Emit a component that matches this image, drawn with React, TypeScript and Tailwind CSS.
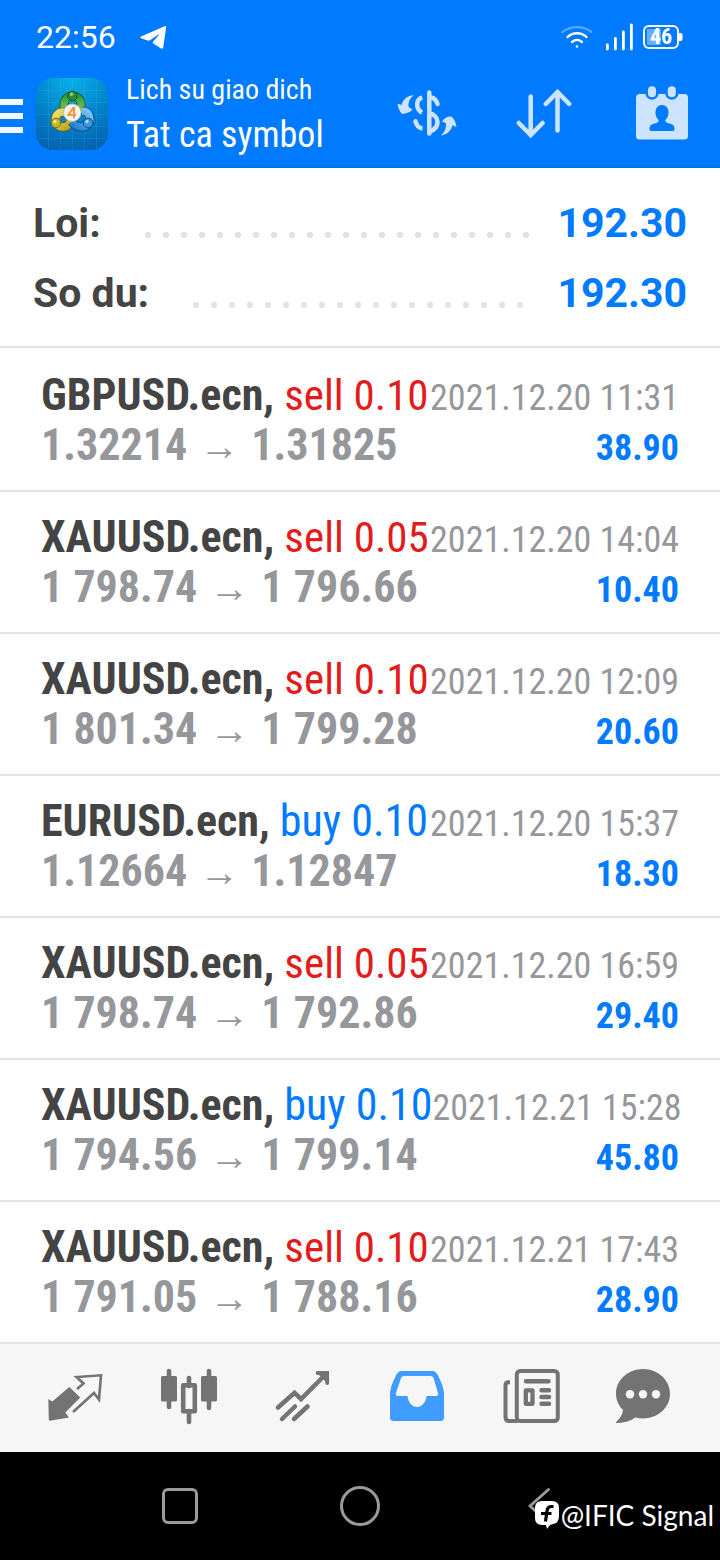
import type { ReactNode } from "react";

type Deal = {
  symbol: string;
  side: "buy" | "sell";
  volume: string;
  open: string;
  close: string;
  time: string;
  profit: string;
};

const deals: Deal[] = [
  { symbol: "GBPUSD.ecn", side: "sell", volume: "0.10", open: "1.32214", close: "1.31825", time: "2021.12.20 11:31", profit: "38.90" },
  { symbol: "XAUUSD.ecn", side: "sell", volume: "0.05", open: "1 798.74", close: "1 796.66", time: "2021.12.20 14:04", profit: "10.40" },
  { symbol: "XAUUSD.ecn", side: "sell", volume: "0.10", open: "1 801.34", close: "1 799.28", time: "2021.12.20 12:09", profit: "20.60" },
  { symbol: "EURUSD.ecn", side: "buy", volume: "0.10", open: "1.12664", close: "1.12847", time: "2021.12.20 15:37", profit: "18.30" },
  { symbol: "XAUUSD.ecn", side: "sell", volume: "0.05", open: "1 798.74", close: "1 792.86", time: "2021.12.20 16:59", profit: "29.40" },
  { symbol: "XAUUSD.ecn", side: "buy", volume: "0.10", open: "1 794.56", close: "1 799.14", time: "2021.12.21 15:28", profit: "45.80" },
  { symbol: "XAUUSD.ecn", side: "sell", volume: "0.10", open: "1 791.05", close: "1 788.16", time: "2021.12.21 17:43", profit: "28.90" },
];

function StatusBar() {
  return (
    <div className="flex h-[72px] items-center justify-between pt-[2px] pl-9 pr-[37px]">
      <div className="flex items-center gap-6">
        <span className="text-[32px] leading-10">22:56</span>
        <svg className="h-6 w-7" viewBox="139 25 28 24" fill="currentColor">
          <path d="M163.500 26.200 140 36.600c-.9.400-.9 1.200 0 1.600l6.500 2.300c.9.300 1.700.2 2.400-.3l8.600-5.700c.8-.4 1 .1.5.6l-5.900 6.300c-.6.700-.5 1.500.3 2l7.700 5c1 .6 1.900.4 2.100-.8l2.900-19.900c.2-1.200-.5-2-1.600-1.500z" />
        </svg>
      </div>
      <div className="flex items-center gap-3">
        <svg className="h-7 w-8" viewBox="561 22 32 28" fill="none" stroke="currentColor" strokeWidth="2.300" strokeLinecap="round">
          <path d="M562.500 31c8-6.500 21-6.500 29 0" opacity=".35" />
          <path d="M567.500 36c5.500-5 13.500-5 19 0" />
          <path d="M572 41c3-2.500 7-2.500 10 0" />
          <circle cx="577" cy="45.500" r="1.200" fill="currentColor" stroke="none" />
        </svg>
        <div className="flex items-center gap-[10px]">
          <svg className="h-7 w-7" viewBox="605 22 28 28" fill="none" stroke="currentColor" strokeWidth="2.800" strokeLinecap="round">
            <path d="M607.400 48v-4M615.400 48V37.500M623.400 48V31M631.400 48V24" />
          </svg>
          <span className="relative flex h-6 w-10 items-center">
            <svg className="absolute inset-0 h-6 w-10" viewBox="643 23 40 24">
              <rect x="644" y="24" width="34" height="22" rx="5" fill="none" stroke="currentColor" strokeWidth="2" />
              <path d="M647 27h14v16h-14z" fill="currentColor" opacity=".4" />
              <path d="M679 31h1.500q2 0 2 2v4q0 2-2 2H679z" fill="currentColor" />
            </svg>
            <span className="relative w-9 text-center font-['Roboto_Condensed',Roboto,sans-serif] text-[22px] leading-6 font-bold">46</span>
          </span>
        </div>
      </div>
    </div>
  );
}

function AppLogo() {
  return (
    <svg className="h-[72px] w-[72px] shrink-0" viewBox="0 0 72 72">
      <defs>
        <radialGradient id="tile" cx=".5" cy="0" r="1">
          <stop offset="0" stopColor="#08b2ea" />
          <stop offset=".55" stopColor="#0284ca" />
          <stop offset="1" stopColor="#0464b2" />
        </radialGradient>
        <linearGradient id="green" x1="0" y1="0" x2="0" y2="1">
          <stop offset="0" stopColor="#2f9a3c" />
          <stop offset="1" stopColor="#8fce62" />
        </linearGradient>
        <linearGradient id="yellow" x1="0" y1="0" x2="1" y2="1">
          <stop offset="0" stopColor="#efe26a" />
          <stop offset="1" stopColor="#b9a51c" />
        </linearGradient>
        <linearGradient id="blue" x1="1" y1="0" x2="0" y2="1">
          <stop offset="0" stopColor="#7cc6f2" />
          <stop offset="1" stopColor="#1c7fd0" />
        </linearGradient>
      </defs>
      <rect width="72" height="72" rx="17" fill="url(#tile)" />
      <path d="M12.500 2v68M24.500 0v72M36.500 0v72M48.500 0v72M60.500 2v68M2 12.500h68M0 24.500h72M0 36.500h72M0 48.500h72M2 60.500h68" stroke="#5fd0f5" strokeWidth=".7" opacity=".2" />
      <g fill="none">
        <circle cx="36.500" cy="26.500" r="8.500" stroke="#14531f" strokeWidth="9" />
        <circle cx="36.500" cy="26.500" r="8.500" stroke="url(#green)" strokeWidth="7.400" />
        <circle cx="27" cy="41.500" r="7.500" stroke="#6f6410" strokeWidth="9" />
        <circle cx="27" cy="41.500" r="7.500" stroke="url(#yellow)" strokeWidth="7.400" />
        <path d="M46 33c6 0 8 4.500 8 8.500s-4 7.500-8 7.500-8-2-10-5" stroke="#0a4680" strokeWidth="9" />
        <path d="M46 33c6 0 8 4.500 8 8.500s-4 7.500-8 7.500-8-2-10-5" stroke="url(#blue)" strokeWidth="7.400" />
      </g>
      <circle cx="36.500" cy="18" r="4.800" fill="#2a8a36" stroke="#14531f" strokeWidth=".9" />
      <circle cx="35.500" cy="16.300" r="1.700" fill="#8ad08c" />
      <circle cx="20" cy="45" r="4.800" fill="#c9b72a" stroke="#6f6410" strokeWidth=".9" />
      <circle cx="19" cy="43.500" r="1.700" fill="#f3eba0" />
      <circle cx="52" cy="45" r="4.800" fill="#3b97da" stroke="#0a4680" strokeWidth=".9" />
      <circle cx="51" cy="43.500" r="1.700" fill="#a8d8f6" />
      <circle cx="36.300" cy="34.700" r="8.700" fill="#f6f4f2" stroke="#bdbdbd" strokeWidth=".8" />
      <path d="M37.500 29.500l-5 7.500h7.500M38 29v11.500" fill="none" stroke="#f29a4a" strokeWidth="2.200" />
    </svg>
  );
}

function Header() {
  return (
    <header className="flex h-24 items-center border-b-2 border-[#006fe8] pr-8 pb-[10px]">
      <button aria-label="Menu" className="mt-1 flex w-[23px] flex-col gap-2">
        <span className="h-[6px] bg-[#f0f7ff]" />
        <span className="h-[6px] bg-[#f0f7ff]" />
        <span className="h-[6px] bg-[#f0f7ff]" />
      </button>
      <div className="ml-[13px] flex flex-1 items-center">
        <AppLogo />
        <div className="ml-[18px] font-['Roboto_Condensed',Roboto,sans-serif] whitespace-nowrap">
          <p className="text-[28px] leading-[42px]">Lich su giao dich</p>
          <h1 className="text-[36px] leading-[48px]">Tat ca symbol</h1>
        </div>
      </div>
      <div className="flex items-center gap-14 text-[#cce4ff]">
        <button aria-label="Deals">
          <svg className="h-14 w-16" viewBox="396 86 64 56" fill="none" stroke="currentColor" strokeWidth="4.500">
            <path d="M429.300 92.500v41" strokeLinecap="round" />
            <path d="M422.300 97.500c-6 1.500-7.500 11-.3 15" />
            <path d="M415.500 121.500c1 4 3 6.500 7 7" />
            <circle cx="415.600" cy="121.300" r="2.200" fill="currentColor" stroke="none" />
            <path d="M431 97.500c3.500.5 5.500 3 6.500 6.500" strokeLinecap="round" />
            <path d="M430 113.500c4 1 7.500 4 7.500 8.500s-3.500 8-7.500 9.500" />
            <g fill="currentColor" stroke="none">
              <path d="M397.500 103.500l4 1.500c1.500-5.500 6-9.500 12-9.700-3.500 3-5.500 7-5 11.500l4 3c-3 2.700-6 3.900-10.500 4.200-2.500-3-4-6-4.500-10.500z" />
              <path d="M442 121.500c2-3.300 5-5 9.500-5 3 3 4.500 6 5 10.500l-4-1.700c-1.500 5.700-5.500 9.500-11.500 10.200 3.500-3.500 5.500-7.500 5-12.300z" />
            </g>
          </svg>
        </button>
        <button aria-label="Sort">
          <svg className="h-14 w-14" viewBox="516 86 56 56" fill="none" stroke="currentColor" strokeWidth="4.500" strokeLinecap="round">
            <path d="M530.700 96.500V135M518.800 123l11.900 12 11.900-12M557.500 130.500V92M545.800 104l11.700-12 11.700 12" />
          </svg>
        </button>
        <button aria-label="Period" className="ml-2">
          <svg className="h-14 w-[52px]" viewBox="635 86 52 56" fill="currentColor">
            <rect x="635" y="94" width="52" height="45.500" rx="3.500" />
            <g stroke="#007aff" strokeWidth="2.500">
              <rect x="645.700" y="85" width="10.600" height="13.500" rx="5.300" />
              <rect x="665.500" y="85" width="10.600" height="13.500" rx="5.300" />
            </g>
            <path d="M661 105c4 0 6.500 3 6.500 7.500 0 3-1 5.500-3.200 7.500 0 2 1 2.700 3.200 3.300 4 1 6 2 6 5.700 0 1.300-.5 2-2 2h-21c-1.500 0-2-.7-2-2 0-3.700 2-4.700 6-5.700 2.200-.6 3.200-1.300 3.200-3.300-2.200-2-3.200-4.500-3.200-7.500 0-4.500 2.500-7.500 6.500-7.500z" fill="#007aff" />
          </svg>
        </button>
      </div>
    </header>
  );
}

function SummaryRow({ label, value }: { label: string; value: string }) {
  return (
    <div className="flex h-[70px] items-center">
      <dt className="text-[#444]">{label}</dt>
      <dd className="flex flex-1 items-center text-[#007aff]">
        <span className="mt-[22px] mr-6 ml-[38px] h-[6px] flex-1 bg-[radial-gradient(circle,#e3e3e3_3px,transparent_3px)] bg-[length:18px_6px] bg-repeat-x" />
        {value}
      </dd>
    </div>
  );
}

function DealRow({ deal }: { deal: Deal }) {
  return (
    <li className="border-b-2 border-[#e3e3e3] px-[41px] py-5 whitespace-nowrap">
      <div className="flex h-[50px] items-baseline justify-between leading-[50px]">
        <p className="text-[44px]">
          <span className="font-bold text-[#444]">{deal.symbol},</span>{" "}
          <span className={deal.side === "buy" ? "text-[#007aff]" : "text-[43px] text-[#e31b1b]"}>
            {deal.side} {deal.volume}
          </span>
        </p>
        <time className="text-[36px] text-[#96979b]">{deal.time}</time>
      </div>
      <div className="flex h-[50px] items-baseline justify-between leading-[50px] font-bold">
        <p className="flex items-baseline gap-3 text-[44px] text-[#96979b]">
          <span>{deal.open}</span>
          <span className="font-['Liberation_Sans',sans-serif] text-[40px] font-normal">→</span>
          <span>{deal.close}</span>
        </p>
        <p className="text-[36px] text-[#007aff]">{deal.profit}</p>
      </div>
    </li>
  );
}

function NavButton({ label, active, children }: { label: string; active?: boolean; children: ReactNode }) {
  return (
    <button aria-label={label} className={active ? "flex flex-1 justify-center text-[#419cff]" : "flex flex-1 justify-center text-[#737373]"}>
      {children}
    </button>
  );
}

function TabBar() {
  return (
    <nav className="flex h-[108px] items-center bg-[#f6f6f6] px-[18px] pb-1">
      <NavButton label="Quotes">
        <svg className="h-15 w-15" viewBox="45 1366 60 60" fill="currentColor">
          <path d="M48.300 1399l4 2.500 17-14.500 11 10.500-15 15 3.700 5-19 3.300q-1.200 0-1.200-1z" />
          <path d="M77 1389l6.500-5.500-7-6.500 24.500-1.700-2 24.200-5-6.500-21 19" fill="none" stroke="currentColor" strokeWidth="2.600" />
        </svg>
      </NavButton>
      <NavButton label="Charts">
        <svg className="h-15 w-15" viewBox="159 1366 60 60" fill="currentColor">
          <rect x="161" y="1376" width="16" height="25.500" rx="1.500" />
          <rect x="201" y="1376" width="16" height="25.500" rx="1.500" />
          <path d="M169 1371v36M209 1371v37M189 1378v8M189 1411v11" stroke="currentColor" strokeWidth="4.600" strokeLinecap="round" />
          <rect x="183.200" y="1385.200" width="11.600" height="26" fill="none" stroke="currentColor" strokeWidth="4.600" strokeLinejoin="round" />
        </svg>
      </NavButton>
      <NavButton label="Trade">
        <svg className="h-15 w-15" viewBox="273 1366 60 60" fill="none" stroke="currentColor" strokeWidth="4.500" strokeLinecap="round">
          <path d="M278 1407.500l16.500-14.700 6.500 6.200 24-24M282 1419l13-12.500M294 1419l13.500-12.500" />
          <path d="M317.500 1373h9.700v10" strokeWidth="3.800" />
          <path d="M319 1375h7v7z" fill="currentColor" stroke="none" />
        </svg>
      </NavButton>
      <NavButton label="History" active>
        <svg className="h-15 w-15" viewBox="387 1366 60 60" fill="currentColor" fillRule="evenodd">
          <path d="M402.500 1371h29c4 0 5.500 2 7 5.500 3.500 7 5.500 12 5.500 18.500v22.500q0 3.500-3.500 3.500h-47q-3.500 0-3.500-3.500V1395c0-6.500 2-11.500 5.500-18.500 1.500-3.500 3-5.500 7-5.500zM404 1376c-1.500 0-2.500.7-3 2l-5 15c-.5 2 .2 3 1.700 3h9.800c.5 6 4.500 11 9.500 11s9-5 9.500-11h9.800c1.500 0 2.200-1 1.700-3l-4.500-15c-.5-1.300-1.500-2-3-2z" />
        </svg>
      </NavButton>
      <NavButton label="News">
        <svg className="h-15 w-15" viewBox="501 1366 60 60" fill="none" stroke="currentColor" strokeWidth="4" strokeLinecap="round">
          <rect x="516.800" y="1371" width="41" height="50" rx="3.500" />
          <path d="M510 1382.200h-1.500q-3 0-3 3V1417q0 4 4 4h8" strokeLinecap="butt" />
          <path d="M526 1381.300h22.500M541.500 1390.200h7.500M541.500 1397h7.500M541.500 1403.700h7.500" strokeWidth="4.500" />
          <rect x="525.800" y="1390.300" width="6.700" height="13.500" strokeWidth="4.300" strokeLinejoin="round" />
        </svg>
      </NavButton>
      <NavButton label="Chat">
        <svg className="h-15 w-15" viewBox="615 1366 60 60" fill="currentColor">
          <path d="M643 1369c15 0 27 11 27 24.800s-12 24.700-27 24.700c-2.700 0-5.300-.3-7.700-.9-5 3.500-11 5.600-18.800 5.400-.7 0-.8-.6-.3-1 3.800-3.500 6.300-7 6.800-12-4.500-4.500-7-10-7-16.200 0-13.800 12-24.800 27-24.800z" />
          <g fill="#f6f6f6">
            <circle cx="630" cy="1394.200" r="4.200" />
            <circle cx="643" cy="1394.200" r="4.200" />
            <circle cx="656" cy="1394.200" r="4.200" />
          </g>
        </svg>
      </NavButton>
    </nav>
  );
}

function SystemBar() {
  return (
    <footer className="relative grid h-[108px] grid-cols-3 place-items-center bg-black px-[90px] text-[#9a9a9a]">
      <button aria-label="Recent apps" className="h-9 w-9 rounded-[6px] border-[3px] border-current" />
      <button aria-label="Home" className="h-10 w-10 rounded-full border-[3px] border-current" />
      <button aria-label="Back">
        <svg className="h-10 w-6" viewBox="528 1486 24 40" fill="none" stroke="currentColor" strokeWidth="3" strokeLinecap="round" strokeLinejoin="round">
          <path d="M548.500 1489.500l-18.500 16.500 18.500 16.500" />
        </svg>
      </button>
      <p className="absolute right-[6px] bottom-[25px] flex items-center gap-[2px] font-[Lato,sans-serif] text-[28px] leading-10 whitespace-nowrap text-white">
        <svg className="h-7 w-6" viewBox="536 1503 24 28">
          <path d="M543 1503h10q7 0 7 7v8q0 7-6 8l-3 1-3 4-1-4h-4q-7 0-7-7v-10q0-7 7-7z" fill="#fff" />
          <path d="M554.500 1508.500h-2q-4 0-4.500 4.500l-1.500 10.500M542 1515.500h10.500" fill="none" stroke="#000" strokeWidth="3.200" />
        </svg>
        @IFIC Signal
      </p>
    </footer>
  );
}

export default function App() {
  return (
    <div className="flex min-h-screen flex-col bg-white font-[Roboto,sans-serif]">
      <div className="bg-[#007aff] text-white">
        <StatusBar />
        <Header />
      </div>
      <main className="flex-1">
        <dl className="border-b-2 border-[#e3e3e3] px-[33px] pt-[21px] pb-[17px] text-[41px] font-bold">
          <SummaryRow label="Loi:" value="192.30" />
          <SummaryRow label="So du:" value="192.30" />
        </dl>
        <ul className="pt-[2px] font-['Roboto_Condensed',Roboto,sans-serif]">
          {deals.map((deal) => (
            <DealRow key={deal.time} deal={deal} />
          ))}
        </ul>
      </main>
      <TabBar />
      <SystemBar />
    </div>
  );
}
